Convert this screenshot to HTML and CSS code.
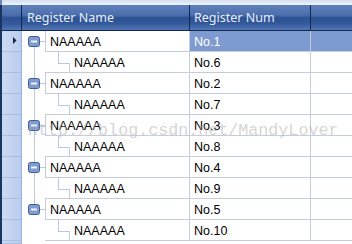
FILE: index.html
```html
<!DOCTYPE html>
<html>
<head>
<meta charset="utf-8">
<link rel="stylesheet" href="styles.css">
</head>
<body>
<div class="grid">
  <div class="topband"></div>
  <div class="header">
    <div class="hcell corner"></div>
    <div class="hcell hname">Register Name</div>
    <div class="hcell hnum">Register Num</div>
    <div class="hcell hfill"></div>
  </div>
  <div class="body">
    <div class="row">
      <div class="ind"><svg width="19" height="20" class="arrow"><path d="M11 6 L14.5 9.5 L11 13 Z" fill="#15253f"/></svg></div>
      <div class="tree">
        <svg class="gut" width="23" height="21"><line x1="12.5" y1="16" x2="12.5" y2="21"/><line x1="18" y1="10.5" x2="23" y2="10.5"/><rect class="box" x="6.5" y="5.5" width="11" height="10" rx="2"/><line class="minus" x1="9" y1="10.5" x2="15" y2="10.5"/></svg>
        <div class="txt ptxt">NAAAAA</div>
      </div>
      <div class="num sel">No.1</div>
      <div class="fill sel"></div>
    </div>
    <div class="row">
      <div class="ind"></div>
      <div class="tree">
        <svg class="gut" width="48" height="21"><line x1="12.5" y1="0" x2="12.5" y2="21"/><line class="rb" x1="23" y1="20.5" x2="48" y2="20.5"/><line x1="36.5" y1="0" x2="36.5" y2="12"/><line x1="36" y1="11.5" x2="48" y2="11.5"/><line class="rb" x1="47.5" y1="11" x2="47.5" y2="21"/></svg>
        <div class="txt ctxt">NAAAAA</div>
      </div>
      <div class="num">No.6</div>
      <div class="fill"></div>
    </div>
    <div class="row">
      <div class="ind"></div>
      <div class="tree">
        <svg class="gut" width="23" height="21"><line x1="12.5" y1="0" x2="12.5" y2="5"/><line x1="12.5" y1="16" x2="12.5" y2="21"/><line x1="18" y1="10.5" x2="23" y2="10.5"/><rect class="box" x="6.5" y="5.5" width="11" height="10" rx="2"/><line class="minus" x1="9" y1="10.5" x2="15" y2="10.5"/></svg>
        <div class="txt ptxt">NAAAAA</div>
      </div>
      <div class="num">No.2</div>
      <div class="fill"></div>
    </div>
    <div class="row">
      <div class="ind"></div>
      <div class="tree">
        <svg class="gut" width="48" height="21"><line x1="12.5" y1="0" x2="12.5" y2="21"/><line class="rb" x1="23" y1="20.5" x2="48" y2="20.5"/><line x1="36.5" y1="0" x2="36.5" y2="12"/><line x1="36" y1="11.5" x2="48" y2="11.5"/><line class="rb" x1="47.5" y1="11" x2="47.5" y2="21"/></svg>
        <div class="txt ctxt">NAAAAA</div>
      </div>
      <div class="num">No.7</div>
      <div class="fill"></div>
    </div>
    <div class="row">
      <div class="ind"></div>
      <div class="tree">
        <svg class="gut" width="23" height="21"><line x1="12.5" y1="0" x2="12.5" y2="5"/><line x1="12.5" y1="16" x2="12.5" y2="21"/><line x1="18" y1="10.5" x2="23" y2="10.5"/><rect class="box" x="6.5" y="5.5" width="11" height="10" rx="2"/><line class="minus" x1="9" y1="10.5" x2="15" y2="10.5"/></svg>
        <div class="txt ptxt">NAAAAA</div>
      </div>
      <div class="num">No.3</div>
      <div class="fill"></div>
    </div>
    <div class="row">
      <div class="ind"></div>
      <div class="tree">
        <svg class="gut" width="48" height="21"><line x1="12.5" y1="0" x2="12.5" y2="21"/><line class="rb" x1="23" y1="20.5" x2="48" y2="20.5"/><line x1="36.5" y1="0" x2="36.5" y2="12"/><line x1="36" y1="11.5" x2="48" y2="11.5"/><line class="rb" x1="47.5" y1="11" x2="47.5" y2="21"/></svg>
        <div class="txt ctxt">NAAAAA</div>
      </div>
      <div class="num">No.8</div>
      <div class="fill"></div>
    </div>
    <div class="row">
      <div class="ind"></div>
      <div class="tree">
        <svg class="gut" width="23" height="21"><line x1="12.5" y1="0" x2="12.5" y2="5"/><line x1="12.5" y1="16" x2="12.5" y2="21"/><line x1="18" y1="10.5" x2="23" y2="10.5"/><rect class="box" x="6.5" y="5.5" width="11" height="10" rx="2"/><line class="minus" x1="9" y1="10.5" x2="15" y2="10.5"/></svg>
        <div class="txt ptxt">NAAAAA</div>
      </div>
      <div class="num">No.4</div>
      <div class="fill"></div>
    </div>
    <div class="row">
      <div class="ind"></div>
      <div class="tree">
        <svg class="gut" width="48" height="21"><line x1="12.5" y1="0" x2="12.5" y2="21"/><line class="rb" x1="23" y1="20.5" x2="48" y2="20.5"/><line x1="36.5" y1="0" x2="36.5" y2="12"/><line x1="36" y1="11.5" x2="48" y2="11.5"/><line class="rb" x1="47.5" y1="11" x2="47.5" y2="21"/></svg>
        <div class="txt ctxt">NAAAAA</div>
      </div>
      <div class="num">No.9</div>
      <div class="fill"></div>
    </div>
    <div class="row">
      <div class="ind"></div>
      <div class="tree">
        <svg class="gut" width="23" height="21"><line x1="12.5" y1="0" x2="12.5" y2="5"/><line x1="18" y1="10.5" x2="23" y2="10.5"/><rect class="box" x="6.5" y="5.5" width="11" height="10" rx="2"/><line class="minus" x1="9" y1="10.5" x2="15" y2="10.5"/></svg>
        <div class="txt ptxt">NAAAAA</div>
      </div>
      <div class="num">No.5</div>
      <div class="fill"></div>
    </div>
    <div class="row">
      <div class="ind"></div>
      <div class="tree">
        <svg class="gut" width="48" height="21"><line class="rb" x1="23" y1="20.5" x2="48" y2="20.5"/><line x1="36.5" y1="0" x2="36.5" y2="12"/><line x1="36" y1="11.5" x2="48" y2="11.5"/><line class="rb" x1="47.5" y1="11" x2="47.5" y2="21"/></svg>
        <div class="txt ctxt">NAAAAA</div>
      </div>
      <div class="num">No.10</div>
      <div class="fill"></div>
    </div>
    <div class="row tail">
      <div class="ind"></div>
    </div>
  </div>
  <div class="watermark">http://blog.csdn.net/MandyLover</div>
</div>
</body>
</html>
```

FILE: styles.css
```css
* { box-sizing: border-box; }
html, body { margin: 0; padding: 0; background: #ffffff; }
.grid {
  position: relative;
  width: 352px;
  height: 244px;
  overflow: hidden;
  background: #ffffff;
  font-family: "Liberation Sans", Arial, sans-serif;
  font-size: 12.5px;
  color: #000000;
}
.topband {
  height: 5px;
  background: linear-gradient(#d5dff0, #eef3fb);
  border-left: 2px solid #6b87b7;
}
.header {
  display: flex;
  height: 26px;
  border-bottom: 1px solid #102850;
  border-left: 2px solid #1a3563;
  background: linear-gradient(#5f82bd 0%, #4c6fad 40%, #2d5292 52%, #34599a 75%, #5376b4 100%);
}
.hcell {
  height: 25px;
  line-height: 25px;
  color: #e6effd;
  font-family: "Noto Sans", "Open Sans", sans-serif;
  font-size: 12.5px;
  border-right: 1px solid #112a54;
  padding-left: 5px;
  white-space: nowrap;
}
.corner { width: 20px; }
.hname { width: 168px; }
.hnum { width: 121px; padding-left: 4px; }
.hfill { flex: 1; border-right: none; }
.body {
  border-left: 2px solid #1a3563;
}
.row {
  display: flex;
  height: 21px;
}
.row.tail { height: 3px; }
.ind {
  width: 20px;
  height: 100%;
  background: linear-gradient(90deg, #ccdbf3, #b9cdee);
  border-right: 1px solid #9cb4dc;
  border-bottom: 1px solid #a9bfe2;
}
.arrow { display: block; }
.tree {
  width: 168px;
  display: flex;
  border-right: 1px solid #c3cddc;
}
.gut { display: block; flex: none; }
.gut line { stroke: #bac7da; stroke-width: 1; }
.gut line.rb { stroke: #c3cddc; }
.gut .box {
  fill: #7f9bd0;
  stroke: #3d5f98;
  stroke-width: 1;
}
.gut line.minus { stroke: #eef3fb; stroke-width: 2; }
.txt {
  flex: 1;
  height: 21px;
  line-height: 20px;
  padding-top: 1px;
  border-bottom: 1px solid #c3cddc;
  white-space: nowrap;
}
.ptxt { border-left: 1px solid #c3cddc; padding-left: 4px; }
.ctxt { padding-left: 4px; }
.num {
  width: 121px;
  height: 21px;
  line-height: 20px;
  padding-top: 1px;
  padding-left: 4px;
  border-right: 1px solid #c3cddc;
  border-bottom: 1px solid #c3cddc;
}
.fill {
  flex: 1;
  height: 21px;
  border-bottom: 1px solid #c3cddc;
}
.sel {
  background: #7d9bd1;
  color: #ffffff;
}
.watermark {
  position: absolute;
  left: 28px;
  top: 122px;
  font-family: "Liberation Mono", monospace;
  font-size: 16.7px;
  line-height: 17px;
  color: rgba(170, 170, 170, 0.5);
  white-space: nowrap;
  pointer-events: none;
}
```
